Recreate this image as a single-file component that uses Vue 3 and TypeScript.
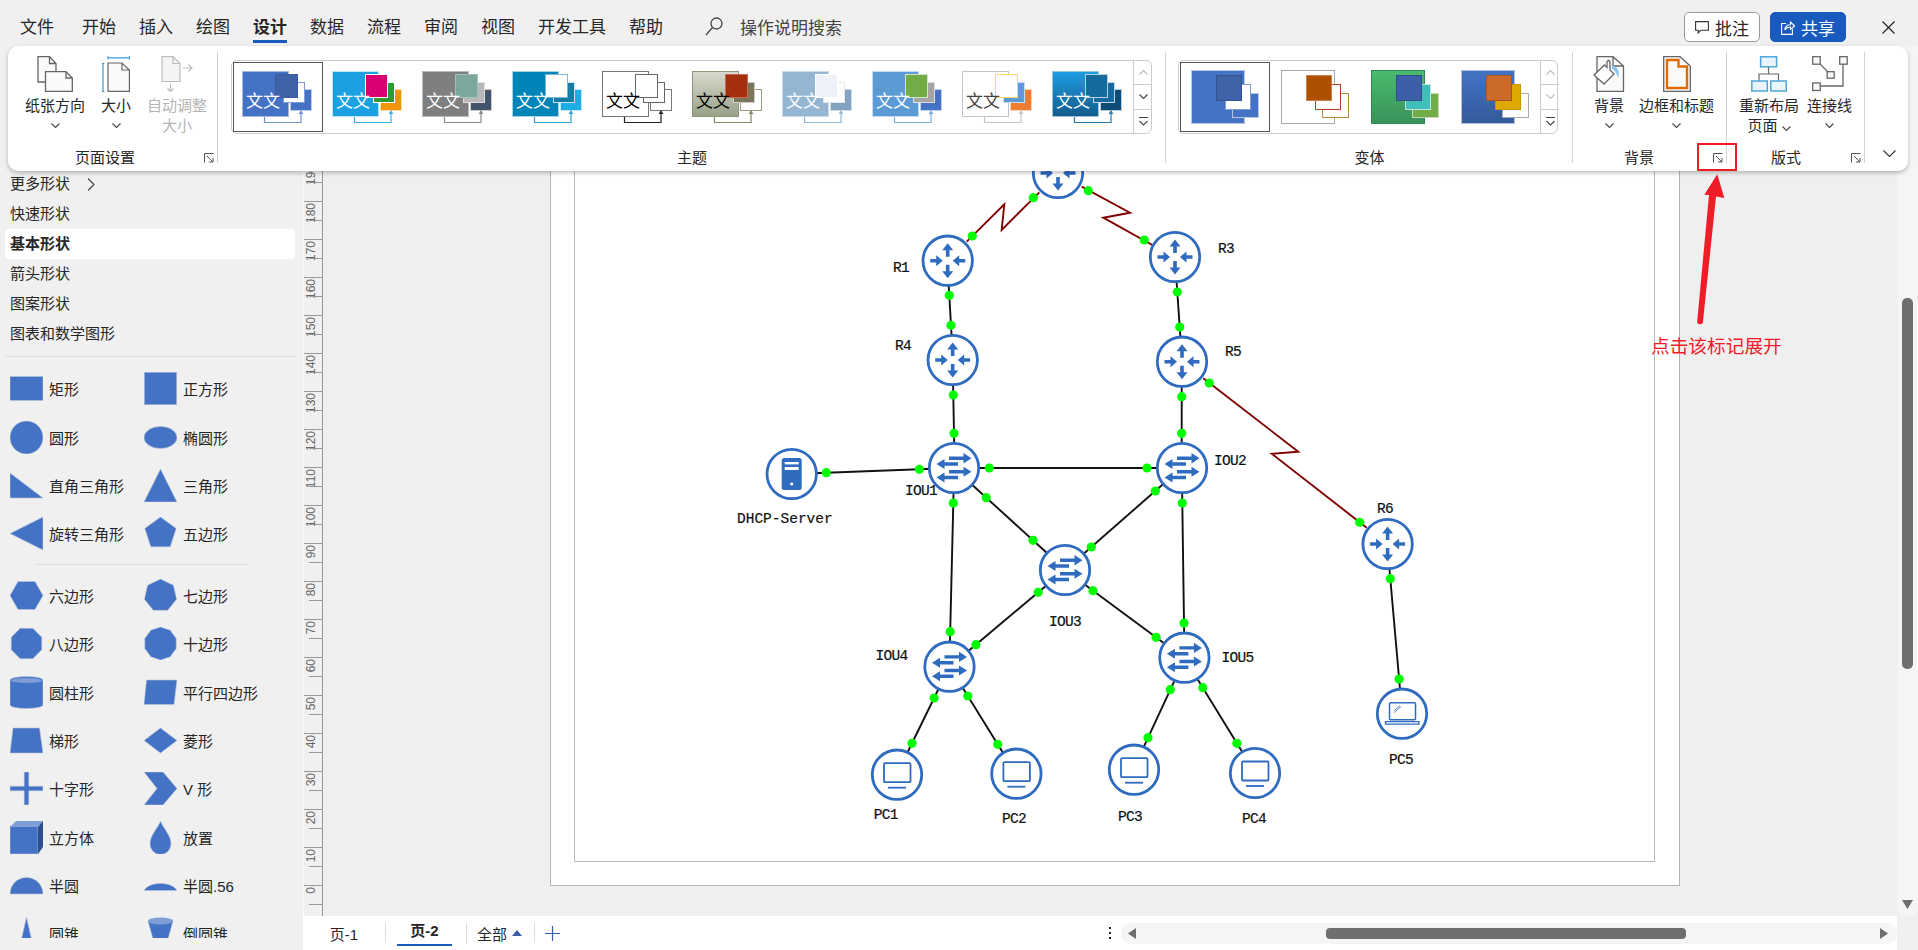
<template>
    <div class="app">
        <svg class="gradients" width="0" height="0" aria-hidden="true">
            <defs>
                <linearGradient id="g-stone" x1="0" y1="0" x2="0" y2="1">
                    <stop offset="0" stop-color="#d9dbce" />
                    <stop offset="1" stop-color="#98a188" />
                </linearGradient>
                <linearGradient id="g-ocean" x1="0" y1="0" x2="0" y2="1">
                    <stop offset="0" stop-color="#1f9de4" />
                    <stop offset="1" stop-color="#125c8a" />
                </linearGradient>
                <linearGradient id="g-leaf" x1="0" y1="0" x2="0" y2="1">
                    <stop offset="0" stop-color="#4abb6c" />
                    <stop offset="1" stop-color="#38925a" />
                </linearGradient>
                <linearGradient id="g-royal" x1="0" y1="0" x2="0" y2="1">
                    <stop offset="0" stop-color="#4472c4" />
                    <stop offset="1" stop-color="#335a9a" />
                </linearGradient>
            </defs>
        </svg>

        <header class="tabbar">
            <span v-for="tab in tabs" :key="tab" class="tab" :class="{ active: tab === '设计' }">{{ tab }}</span>
            <div class="search">
                <svg width="18" height="19" viewBox="0 0 18 19" fill="none" stroke="#444" stroke-width="1.3">
                    <circle cx="11.5" cy="6.5" r="5.5" />
                    <path d="M7.5 10.5L1 18" />
                </svg>
                <span>操作说明搜索</span>
            </div>
            <div class="top-actions">
                <button type="button" class="top-btn comment">
                    <svg width="14" height="13" viewBox="0 0 14 13" fill="none" stroke="#333" stroke-width="1.1">
                        <path d="M.6.6H13.4V9.2H6L3.2 12V9.2H.6Z" />
                    </svg>
                    批注
                </button>
                <button type="button" class="top-btn share">
                    <svg width="14" height="15" viewBox="0 0 14 15" fill="none" stroke="#fff" stroke-width="1.1">
                        <path d="M5 3.5H.6V14.4H11.4V9" />
                        <path d="M3.8 10C4 6.5 6.5 4.8 9.5 4.8V2L13.6 6L9.5 9.4V7C7 7 5 8 3.8 10Z" />
                    </svg>
                    共享
                </button>
                <svg class="close" width="13" height="13" viewBox="0 0 13 13" stroke="#222" stroke-width="1.2">
                    <path d="M.5.5L12.5 12.5M12.5.5L.5 12.5" />
                </svg>
            </div>
        </header>

        <div class="workspace">
            <aside class="panel">
                <div
                    v-for="item in stencils"
                    :key="item"
                    class="stencil"
                    :class="{ current: item === '基本形状' }"
                >
                    {{ item }}
                    <svg v-if="item === '更多形状'" class="more" width="8" height="13" viewBox="0 0 8 13" fill="none" stroke="#444" stroke-width="1.1">
                        <path d="M1 .5L7 6.5L1 12.5" />
                    </svg>
                </div>
                <div class="rule"></div>
                <div class="shape-grid first">
                    <div v-for="s in shapesA" :key="s.label" class="shape">
                        <svg width="33" height="33" viewBox="0 0 33 33">
                            <path :d="s.d" class="shape-fill" />
                            <path v-if="s.light" :d="s.light" fill="#7f9dd6" />
                            <path v-if="s.dark" :d="s.dark" fill="#2f4f8c" />
                        </svg>
                        <span>{{ s.label }}</span>
                    </div>
                </div>
                <div class="rule short"></div>
                <div class="shape-grid">
                    <div v-for="s in shapesB" :key="s.label" class="shape">
                        <svg width="33" height="33" viewBox="0 0 33 33">
                            <path :d="s.d" class="shape-fill" />
                            <path v-if="s.light" :d="s.light" fill="#7f9dd6" />
                            <path v-if="s.dark" :d="s.dark" fill="#2f4f8c" />
                        </svg>
                        <span>{{ s.label }}</span>
                    </div>
                </div>
            </aside>

            <div class="center">
                <div class="stage">
                    <div class="ruler">
                        <div v-for="n in rulerMarks" :key="n" class="mark">
                            <span>{{ n }}</span>
                        </div>
                    </div>
                    <div class="canvas">
                        <div class="page">
                            <div class="page-inner"></div>
                            <svg class="diagram" width="1130" height="840" viewBox="550 46 1130 840">
                                <defs>
                                    <g id="ico-router" fill="#2f6bbf" stroke="none">
                                        <path d="M-1.8-4V-10.5H-5.5L0-17.5L5.5-10.5H1.8V-4Z" />
                                        <path d="M-1.8 4V10.5H-5.5L0 17.5L5.5 10.5H1.8V4Z" />
                                        <path d="M-17.5-1.8H-11.5V-5.5L-5 0L-11.5 5.5V1.8H-17.5Z" />
                                        <path d="M17.5-1.8H11.5V-5.5L5 0L11.5 5.5V1.8H17.5Z" />
                                    </g>
                                    <g id="ico-switch" fill="#2f6bbf" stroke="none">
                                        <path d="M-5-11.5H9.5V-15L17.5-9.8L9.5-4.6V-8.1H-5Z" />
                                        <path d="M4-5.7H-9.5V-9L-17.5-4L-9.5 1V-2.3H4Z" />
                                        <path d="M-5 2.1H9.5V-1.2L17.5 3.8L9.5 8.8V5.5H-5Z" />
                                        <path d="M4 7.8H-9.5V4.5L-17.5 9.5L-9.5 14.5V11.2H4Z" />
                                    </g>
                                    <g id="ico-server">
                                        <rect x="-10" y="-16" width="20" height="32" rx="2.5" fill="#2f6bbf" />
                                        <rect x="-7" y="-12" width="14" height="2.4" fill="#fff" />
                                        <rect x="-7" y="-7" width="14" height="3" fill="#fff" />
                                        <circle cx="0" cy="10" r="1.6" fill="#fff" />
                                    </g>
                                    <g id="ico-pc" fill="none" stroke="#2f6bbf">
                                        <rect x="-13" y="-11.5" width="26.5" height="19" rx="1" stroke-width="1.8" />
                                        <path d="M-9 13H9" stroke-width="1.8" />
                                    </g>
                                    <g id="ico-laptop" fill="none" stroke="#2f6bbf">
                                        <rect x="-12.5" y="-11" width="26" height="17" rx="1" stroke-width="1.5" />
                                        <path d="M-8-3L-2-8M-8-1L-1-7" stroke-width=".8" />
                                        <path d="M-16.5 8H17V10.5H-16.5Z" stroke-width="1.3" />
                                    </g>
                                </defs>
                                <polyline
                                    v-for="(w, i) in wires"
                                    :key="i"
                                    :points="w.points"
                                    :stroke="w.color"
                                    stroke-width="1.9"
                                    fill="none"
                                />
                                <g v-for="n in nodes" :key="n.x + '-' + n.y" :transform="`translate(${n.x} ${n.y})`">
                                    <circle r="24.7" fill="#fff" stroke="#2f6bbf" stroke-width="2.8" />
                                    <use :href="'#ico-' + n.kind" />
                                </g>
                                <circle v-for="(d, i) in dots" :key="i" :cx="d[0]" :cy="d[1]" r="4.6" fill="#00ff00" />
                                <text
                                    v-for="t in labels"
                                    :key="t.text"
                                    class="node-label"
                                    :class="{ wide: t.text.length > 4 }"
                                    :x="t.x"
                                    :y="t.y + 5"
                                >{{ t.text }}</text>
                            </svg>
                        </div>
                    </div>
                    <div class="vscroll">
                        <div class="vthumb"></div>
                        <svg class="vdown" width="11" height="9" viewBox="0 0 11 9"><path d="M0 0H11L5.5 9Z" fill="#6f6f6f" /></svg>
                    </div>
                </div>

                <footer class="pagebar">
                    <span class="page-tab">页-1</span>
                    <i class="sep"></i>
                    <span class="page-tab active">页-2</span>
                    <i class="sep"></i>
                    <span class="all">全部</span>
                    <svg class="all-tri" width="10" height="6" viewBox="0 0 10 6"><path d="M5 0L10 6H0Z" fill="#3a5ca8" /></svg>
                    <i class="sep plus-sep"></i>
                    <svg class="plus" width="15" height="15" viewBox="0 0 15 15" stroke="#3a5ca8" stroke-width="1.2">
                        <path d="M0 7.5H15M7.5 0V15" />
                    </svg>
                    <div class="hscroll-wrap">
                        <svg width="2" height="12" viewBox="0 0 2 12" fill="#222">
                            <rect y="0" width="2" height="2" /><rect y="5" width="2" height="2" /><rect y="10" width="2" height="2" />
                        </svg>
                        <div class="hscroll">
                            <svg width="8" height="11" viewBox="0 0 8 11"><path d="M8 0V11L0 5.5Z" fill="#6f6f6f" /></svg>
                            <div class="hthumb"></div>
                            <svg width="8" height="11" viewBox="0 0 8 11"><path d="M0 0V11L8 5.5Z" fill="#6f6f6f" /></svg>
                        </div>
                    </div>
                </footer>
            </div>
        </div>

        <section class="ribbon">
            <div class="group page-group">
                <div class="tools">
                    <div class="tool w60">
                        <svg width="36" height="36" viewBox="0 0 36 36" fill="#fafafa" stroke="#666" stroke-width="1.3">
                            <path d="M1 .7H12.5L19 7.5V26H1Z" />
                            <path d="M12.5 .7V7.5H19" fill="none" />
                            <path d="M8.5 15.7H29L35.3 22V35.3H8.5Z" />
                            <path d="M29 15.7V22H35.3" fill="none" />
                        </svg>
                        <span>纸张方向</span>
                        <svg class="chev" width="9" height="5" viewBox="0 0 9 5"><path d="M.5 .5L4.5 4.5L8.5 .5" /></svg>
                    </div>
                    <div class="tool w32">
                        <svg width="28" height="36" viewBox="0 0 28 36" fill="none" stroke-width="1.2">
                            <path d="M6 1.8H27.5M6 .2V3.4M27.5 .2V3.4" stroke="#3a9ad9" />
                            <path d="M1 7.5V35.5M0 7.5H2.4M0 35.5H2.4" stroke="#3a9ad9" />
                            <path d="M6 7H20L27.4 14V35.3H6Z" stroke="#666" fill="#fafafa" />
                            <path d="M20 7V14H27.4" stroke="#666" />
                        </svg>
                        <span>大小</span>
                        <svg class="chev" width="9" height="5" viewBox="0 0 9 5"><path d="M.5 .5L4.5 4.5L8.5 .5" /></svg>
                    </div>
                    <div class="tool w60 disabled">
                        <svg width="32" height="36" viewBox="0 0 32 36" fill="none" stroke="#bdbdbd" stroke-width="1.2">
                            <path d="M1 .7H12L19 7.5V25.5H1Z" fill="#f4f4f4" />
                            <path d="M12 .7V7.5H19" />
                            <path d="M22 12H31M27.5 8.5L31 12L27.5 15.5" />
                            <path d="M9.5 27.5V35.5M6.5 32.5L9.5 35.5L12.5 32.5" />
                        </svg>
                        <span>自动调整</span>
                        <span>大小</span>
                    </div>
                </div>
                <div class="group-label" style="padding-right: 16px">页面设置</div>
                <svg class="launcher" width="10" height="10" viewBox="0 0 10 10" fill="none" stroke="#555" stroke-width="1"><path d="M.5 9.5V.5H9.5M3 3L9 9M9 5V9H5" /></svg>
            </div>

            <div class="group theme-group">
                <div class="gallery">
                    <div class="gallery-items">
                        <div v-for="(t, i) in themes" :key="i" class="gallery-item" :class="{ selected: i === 0 }">
                            <svg width="88" height="68" viewBox="1 1 88 68">
                                <rect x="9.5" y="9.5" width="46" height="45" :fill="t.main" :stroke="t.mainStroke" />
                                <rect x="57.5" y="27.5" width="21" height="21" :fill="t.r4" :stroke="t.r4Stroke" />
                                <rect x="50.5" y="20.5" width="21" height="20" :fill="t.r3" :stroke="t.r3Stroke" />
                                <rect x="42.5" y="12.5" width="22" height="23" :fill="t.r2" :stroke="t.r2Stroke" />
                                <path d="M31.5 55V60.5H68V51" fill="none" :stroke="t.link" stroke-width="1.2" />
                                <path d="M68 48L70.4 52H65.6Z" :fill="t.link" />
                                <text x="13" y="45" class="theme-text" :fill="t.text">文文</text>
                            </svg>
                        </div>
                    </div>
                    <div class="gallery-scroll">
                        <div><svg width="9" height="5" viewBox="0 0 9 5" class="chev off"><path d="M.5 4.5L4.5 .5L8.5 4.5" /></svg></div>
                        <div><svg width="9" height="5" viewBox="0 0 9 5" class="chev"><path d="M.5 .5L4.5 4.5L8.5 .5" /></svg></div>
                        <div><svg width="9" height="9" viewBox="0 0 9 9" class="chev"><path d="M0 .5H9M.5 4L4.5 8L8.5 4" /></svg></div>
                    </div>
                </div>
                <div class="group-label">主题</div>
            </div>

            <div class="group variant-group">
                <div class="gallery">
                    <div class="gallery-items">
                        <div v-for="(v, i) in variants" :key="i" class="gallery-item" :class="{ selected: i === 0 }">
                            <svg width="88" height="68" viewBox="1 1 88 68">
                                <rect x="11.5" y="8.5" width="53" height="53" :fill="v.main" :stroke="v.mainStroke" />
                                <rect x="52.5" y="31.5" width="26" height="24" :fill="v.r4" :stroke="v.r4Stroke" />
                                <rect x="45.5" y="22.5" width="25" height="25" :fill="v.r3" :stroke="v.r3Stroke" />
                                <rect x="36.5" y="13.5" width="25" height="25" :fill="v.r2" :stroke="v.r2Stroke" />
                            </svg>
                        </div>
                    </div>
                    <div class="gallery-scroll">
                        <div><svg width="9" height="5" viewBox="0 0 9 5" class="chev off"><path d="M.5 4.5L4.5 .5L8.5 4.5" /></svg></div>
                        <div><svg width="9" height="5" viewBox="0 0 9 5" class="chev off"><path d="M.5 .5L4.5 4.5L8.5 .5" /></svg></div>
                        <div><svg width="9" height="9" viewBox="0 0 9 9" class="chev"><path d="M0 .5H9M.5 4L4.5 8L8.5 4" /></svg></div>
                    </div>
                </div>
                <div class="group-label">变体</div>
            </div>

            <div class="group bg-group">
                <div class="tools">
                    <div class="tool w30">
                        <svg width="32" height="36" viewBox="0 0 32 36" fill="none" stroke="#666" stroke-width="1.3">
                            <path d="M4 .7H20L30.5 10V35.3H4Z" fill="#fafafa" />
                            <path d="M20 .7V10H30.5" />
                            <path d="M19 9C25 11 27 16 25 22C24 18 22 14 19 13Z" fill="#8cc3ea" stroke="none" />
                            <path d="M1 19L11.5 9L14 11.5V6C14 4 17 4 17 6V14L21 18L11 28Z" fill="#fff" />
                        </svg>
                        <span>背景</span>
                        <svg class="chev" width="9" height="5" viewBox="0 0 9 5"><path d="M.5 .5L4.5 4.5L8.5 .5" /></svg>
                    </div>
                    <div class="tool w75">
                        <svg width="28" height="36" viewBox="0 0 28 36" fill="none">
                            <path d="M.7 .7H17L27.3 10V35.3H.7Z" fill="#fafafa" stroke="#666" stroke-width="1.3" />
                            <path d="M4 4H15.5V10.5H24V32H4Z" stroke="#e06c00" stroke-width="2.4" />
                        </svg>
                        <span>边框和标题</span>
                        <svg class="chev" width="9" height="5" viewBox="0 0 9 5"><path d="M.5 .5L4.5 4.5L8.5 .5" /></svg>
                    </div>
                </div>
                <div class="group-label" style="padding-right: 22px">背景</div>
                <svg class="launcher" width="10" height="10" viewBox="0 0 10 10" fill="none" stroke="#555" stroke-width="1"><path d="M.5 9.5V.5H9.5M3 3L9 9M9 5V9H5" /></svg>
            </div>

            <div class="group layout-group">
                <div class="tools">
                    <div class="tool w60">
                        <svg width="36" height="36" viewBox="0 0 36 36" fill="none">
                            <path d="M17.5 11V18M8 25V18H27.5V25" stroke="#666" stroke-width="1.2" />
                            <rect x="9.6" y=".8" width="16" height="10" fill="#eaf4fb" stroke="#4ea6dc" stroke-width="1.5" />
                            <rect x=".8" y="25" width="15.5" height="10" fill="#eaf4fb" stroke="#4ea6dc" stroke-width="1.5" />
                            <rect x="19.8" y="25" width="15.5" height="10" fill="#eaf4fb" stroke="#4ea6dc" stroke-width="1.5" />
                        </svg>
                        <span>重新布局</span>
                        <span>页面 <svg class="chev" width="9" height="5" viewBox="0 0 9 5"><path d="M.5 .5L4.5 4.5L8.5 .5" /></svg></span>
                    </div>
                    <div class="tool w45">
                        <svg width="36" height="36" viewBox="0 0 36 36" fill="none" stroke="#666" stroke-width="1.3">
                            <path d="M8 8L15.5 15.5M31 8V30H8" />
                            <rect x=".7" y=".7" width="7.5" height="7.5" fill="#fafafa" />
                            <rect x="27.7" y=".7" width="7.5" height="7.5" fill="#fafafa" />
                            <rect x="15.2" y="15.7" width="7" height="6.5" fill="#fafafa" />
                            <rect x=".7" y="27" width="7.5" height="7.5" fill="#fafafa" />
                        </svg>
                        <span>连接线</span>
                        <svg class="chev" width="9" height="5" viewBox="0 0 9 5"><path d="M.5 .5L4.5 4.5L8.5 .5" /></svg>
                    </div>
                </div>
                <div class="group-label" style="padding-right: 20px">版式</div>
                <svg class="launcher" width="10" height="10" viewBox="0 0 10 10" fill="none" stroke="#555" stroke-width="1"><path d="M.5 9.5V.5H9.5M3 3L9 9M9 5V9H5" /></svg>
            </div>

            <svg class="collapse" width="13" height="7" viewBox="0 0 13 7" fill="none" stroke="#333" stroke-width="1.1"><path d="M.5 .5L6.5 6.5L12.5 .5" /></svg>
        </section>

        <div class="mark-box"></div>
        <svg class="mark-arrow" width="30" height="152" viewBox="0 0 30 152">
            <path d="M22.3 .3L29.3 24L21 22.4L8 147.6A2.9 2.9 0 0 1 2.2 147.2L14 21L9.3 20.7Z" fill="#f01c28" />
        </svg>
        <div class="mark-text">点击该标记展开</div>
    </div>
</template>

<script setup lang="ts">
interface Swatch {
    main: string;
    mainStroke: string;
    r2: string;
    r2Stroke: string;
    r3: string;
    r3Stroke: string;
    r4: string;
    r4Stroke: string;
    link?: string;
    text?: string;
}

interface ShapeItem {
    label: string;
    d: string;
    light?: string;
    dark?: string;
}

const tabs = ['文件', '开始', '插入', '绘图', '设计', '数据', '流程', '审阅', '视图', '开发工具', '帮助'];
const stencils = ['更多形状', '快速形状', '基本形状', '箭头形状', '图案形状', '图表和数学图形'];

const swatch = (
    main: string, mainStroke: string,
    r2: string, r2Stroke: string,
    r3: string, r3Stroke: string,
    r4: string, r4Stroke: string,
    link?: string, text?: string,
): Swatch => ({ main, mainStroke, r2, r2Stroke, r3, r3Stroke, r4, r4Stroke, link, text });

const themes: Swatch[] = [
    swatch('#4472c4', '#a9bbdc', '#3f62a9', '#3b5a98', '#fff', '#7f9bd3', '#4472c4', '#c0cee6', '#7392d2', '#fff'),
    swatch('#1ba1e2', '#bfe3f6', '#d80073', '#fff', '#339933', '#fff', '#f09609', '#fbe0b0', '#3fb0e6', '#fff'),
    swatch('#7f7f7f', '#bbb', '#7ba79d', '#a3c2ba', '#b8b8b8', '#ddd', '#44546a', '#ccc', '#8a8a8a', '#fff'),
    swatch('#0085b8', '#a8d4e6', '#fff', '#7fb8d0', '#147ca5', '#cde4ee', '#1cade4', '#c3e8f7', '#2aa5d8', '#fff'),
    swatch('#fff', '#777', '#fff', '#666', '#fff', '#666', '#fff', '#777', '#222', '#000'),
    swatch('url(#g-stone)', '#8b9578', '#a5300f', '#c76b50', '#7a7458', '#ccc', '#fff', '#9e9a80', '#7d8b5f', '#000'),
    swatch('#94b6d2', '#ccdbe8', '#eef2f8', '#fff', '#fff', '#e0e8f0', '#84a3bf', '#ccdbe8', '#94b6d2', '#fff'),
    swatch('#5b9bd5', '#c3daf0', '#70ad47', '#d4e5c8', '#a5a5a5', '#ddd', '#4472c4', '#c4d2ea', '#79aee0', '#fff'),
    swatch('#fff', '#c4c4c4', '#fff', '#ffd966', '#5b9bd5', '#c9def2', '#ed7d31', '#f9d5bd', '#c4c4c4', '#444'),
    swatch('url(#g-ocean)', '#9cc3dc', '#156a9e', '#b5cfe0', '#156a9e', '#c3d8e6', '#0f4c75', '#b5cfe0', '#2c78ab', '#fff'),
];

const variants: Swatch[] = [
    swatch('#4472c4', '#b9c7e0', '#3f62a9', '#365491', '#fff', '#7f9bd3', '#4472c4', '#b9c7e0'),
    swatch('#fff', '#aaa', '#af5000', '#c9824a', '#fff', '#b5402a', '#fff', '#b58a3a'),
    swatch('url(#g-leaf)', '#2f8a50', '#3d5fa8', '#2f4c8c', '#40bfb8', '#bfe6e3', '#70ad47', '#c4d9b4'),
    swatch('url(#g-royal)', '#b5c1d8', '#cc6a2a', '#a85520', '#dfa800', '#c79500', '#fff', '#aaa'),
];

const regular = (n: number, rotate: number): string => {
    const pts: string[] = [];
    for (let i = 0; i < n; i++) {
        const a = rotate + (i * 2 * Math.PI) / n - Math.PI / 2;
        pts.push(`${(16.5 + 16.5 * Math.cos(a)).toFixed(2)} ${(16.5 + 16.5 * Math.sin(a)).toFixed(2)}`);
    }
    return 'M' + pts.join('L') + 'Z';
};

const shapesA: ShapeItem[] = [
    { label: '矩形', d: 'M0 4.5H33V28.5H0Z' },
    { label: '正方形', d: 'M.3 .3H32.7V32.7H.3Z' },
    { label: '圆形', d: 'M0 16.5A16.5 16.5 0 1 0 33 16.5A16.5 16.5 0 1 0 0 16.5Z' },
    { label: '椭圆形', d: 'M0 16.5A16.5 11 0 1 0 33 16.5A16.5 11 0 1 0 0 16.5Z' },
    { label: '直角三角形', d: 'M0 4L33 29H0Z' },
    { label: '三角形', d: 'M16.5 0L33 33H0Z' },
    { label: '旋转三角形', d: 'M33 0V33L0 16.5Z' },
    { label: '五边形', d: regular(5, 0) },
];

const shapesB: ShapeItem[] = [
    { label: '六边形', d: 'M8 2.5H25L33 16.5L25 30.5H8L0 16.5Z' },
    { label: '七边形', d: regular(7, 0) },
    { label: '八边形', d: regular(8, Math.PI / 8) },
    { label: '十边形', d: regular(10, 0) },
    { label: '圆柱形', d: 'M0 4A16.5 3.5 0 0 1 33 4V29A16.5 3.5 0 0 1 0 29Z', light: 'M1 4.5A15.5 2.6 0 0 1 32 4.5A15.5 2.6 0 0 1 1 4.5Z' },
    { label: '平行四边形', d: 'M2.5 4H33L30 28.5H0Z' },
    { label: '梯形', d: 'M3 4H29.5L33 29H0Z' },
    { label: '菱形', d: 'M16.5 4L33 16.5L16.5 29L0 16.5Z' },
    { label: '十字形', d: 'M14.2 0H18.8V14.2H33V18.8H18.8V33H14.2V18.8H0V14.2H14.2Z' },
    { label: 'V 形', d: 'M0 0H19L33 16.5L19 33H0L13 16.5Z' },
    { label: '立方体', d: 'M0 5H28V33H0Z', light: 'M0 6L6 0H33L28 6Z', dark: 'M28 6L33 0V26L28 33Z' },
    { label: '放置', d: 'M16.5 0C19 7 27 14 27 23A10.5 10.5 0 0 1 6 23C6 14 14 7 16.5 0Z' },
    { label: '半圆', d: 'M0 25A16.5 16.5 0 0 1 33 25Z' },
    { label: '半圆.56', d: 'M0 21.5C5 12 28 12 33 21.5Z' },
    { label: '圆锥', d: 'M16.5 0L24 33H9Z' },
    { label: '倒圆锥', d: 'M4 4H29L21 33H12Z', light: 'M4 4A12.5 3.4 0 0 1 29 4A12.5 3.4 0 0 1 4 4Z' },
];

const rulerMarks: number[] = [];
for (let n = 190; n >= 0; n -= 10) rulerMarks.push(n);

const nodes = [
    { kind: 'router', x: 1058, y: 173 },
    { kind: 'router', x: 947.7, y: 260.7 },
    { kind: 'router', x: 1175, y: 257 },
    { kind: 'router', x: 952.7, y: 360 },
    { kind: 'router', x: 1182, y: 361.7 },
    { kind: 'router', x: 1387.6, y: 544 },
    { kind: 'switch', x: 954, y: 468 },
    { kind: 'switch', x: 1182, y: 468 },
    { kind: 'switch', x: 1065, y: 570 },
    { kind: 'switch', x: 949.5, y: 666.7 },
    { kind: 'switch', x: 1184.4, y: 657.7 },
    { kind: 'server', x: 791.7, y: 474 },
    { kind: 'pc', x: 897, y: 774.7 },
    { kind: 'pc', x: 1016.4, y: 773.7 },
    { kind: 'pc', x: 1134, y: 769.7 },
    { kind: 'pc', x: 1255, y: 773 },
    { kind: 'laptop', x: 1402, y: 713.7 },
];

// each pair of dots sits on a black link, the line runs on under the node
const linkDots: number[][] = [
    [949.3, 295.3, 951, 325.3],
    [1177.3, 292, 1179.7, 327],
    [953.3, 395, 954, 433.3],
    [1181.7, 396.7, 1181.7, 433.3],
    [826.3, 472.7, 919.3, 469.3],
    [989.3, 468, 1147, 468],
    [953.3, 503, 950.2, 631.7],
    [986.3, 497.7, 1033, 540.3],
    [1155.3, 491, 1091.3, 547],
    [1182.3, 503, 1184, 623],
    [1038.2, 592.3, 975.9, 644.7],
    [1093, 590.7, 1156.1, 637.3],
    [934.1, 698, 912, 743.3],
    [967.8, 696, 997.7, 744.3],
    [1170.3, 689.7, 1148, 737.7],
    [1202.8, 687.7, 1236.9, 743.3],
    [1390.3, 578.7, 1399.1, 679],
];

const extend = ([ax, ay, bx, by]: number[]): string => {
    const len = Math.hypot(bx - ax, by - ay);
    const ux = ((bx - ax) / len) * 20;
    const uy = ((by - ay) / len) * 20;
    return `${ax - ux},${ay - uy} ${bx + ux},${by + uy}`;
};

const wires = [
    ...linkDots.map((l) => ({ points: extend(l), color: '#111' })),
    { points: '1039.3,192.3 1001.7,230 1004.3,204.3 966.7,241.7', color: '#800000' },
    { points: '1081.7,186.7 1130,212.7 1103.3,217.7 1152.3,245', color: '#800000' },
    { points: '1203.3,378.3 1298.3,451.7 1271.7,453.7 1366.7,527.7', color: '#800000' },
];

const dots: number[][] = [
    ...linkDots.flatMap((l) => [[l[0], l[1]], [l[2], l[3]]]),
    [1033.3, 197.7],
    [972.3, 236],
    [1088.3, 190.7],
    [1144.3, 240],
    [1209.3, 383],
    [1359.7, 522.3],
];

const labels = [
    { text: 'R1', x: 893, y: 267 },
    { text: 'R3', x: 1218, y: 248 },
    { text: 'R4', x: 895, y: 345 },
    { text: 'R5', x: 1225, y: 351 },
    { text: 'R6', x: 1377, y: 508 },
    { text: 'IOU1', x: 905, y: 489.7 },
    { text: 'IOU2', x: 1214, y: 460 },
    { text: 'IOU3', x: 1049, y: 621 },
    { text: 'IOU4', x: 875.6, y: 655 },
    { text: 'IOU5', x: 1221.5, y: 657 },
    { text: 'DHCP-Server', x: 737, y: 518 },
    { text: 'PC1', x: 873.7, y: 814 },
    { text: 'PC2', x: 1002, y: 818 },
    { text: 'PC3', x: 1118, y: 816 },
    { text: 'PC4', x: 1242, y: 818 },
    { text: 'PC5', x: 1389, y: 759 },
];
</script>

<style>
html,
body {
    margin: 0;
    background: #f0f0f0;
}
</style>

<style scoped>
.app {
    position: relative;
    width: 1918px;
    height: 950px;
    overflow: hidden;
    background: #f0f0f0;
    color: #262626;
    font-family: "Liberation Sans", "Noto Sans CJK SC", sans-serif;
    font-size: 15px;
}

.gradients {
    position: absolute;
}

.tabbar {
    display: flex;
    height: 46px;
    padding-left: 20px;
    gap: 23px;
    font-size: 17px;
}

.tab {
    position: relative;
    padding-top: 18px;
    line-height: 20px;
}

.tab:first-child {
    margin-right: 5px;
}

.tab.active {
    font-weight: 700;
}

.tab.active::after {
    content: "";
    position: absolute;
    left: 0;
    right: 0;
    top: 40px;
    height: 3px;
    background: #185abd;
}

.search {
    display: flex;
    align-items: center;
    gap: 17px;
    margin-left: 19px;
    padding-top: 7px;
    height: 38px;
    color: #444;
}

.top-actions {
    display: flex;
    align-items: flex-start;
    gap: 10px;
    margin-left: auto;
    padding: 12px 23px 0 0;
}

.top-btn {
    display: flex;
    align-items: center;
    justify-content: center;
    gap: 6px;
    width: 76px;
    height: 30px;
    padding: 0;
    border: 1px solid #999;
    border-radius: 5px;
    background: #fff;
    color: #262626;
    font: inherit;
}

.top-btn.share {
    border-color: #185abd;
    background: #185abd;
    color: #fff;
}

.close {
    margin: 9px 0 0 26px;
}

.workspace {
    display: flex;
    height: 904px;
}

.panel {
    flex: none;
    width: 303px;
    height: 892px;
    padding-top: 123px;
    box-sizing: border-box;
    overflow: hidden;
}

.stencil {
    display: flex;
    align-items: center;
    height: 30px;
    width: 290px;
    margin-left: 5px;
    padding-left: 5px;
    box-sizing: border-box;
    line-height: 30px;
    border-radius: 4px;
}

.stencil.current {
    background: #fff;
    font-weight: 700;
}

.more {
    margin-left: 17px;
}

.rule {
    height: 1px;
    width: 291px;
    margin: 7px 0 0 5px;
    background: #dcdcdc;
}

.rule.short {
    width: 211px;
    margin: 5.5px 0 0 36px;
}

.shape-grid {
    display: grid;
    grid-template-columns: 134px 134px;
    grid-auto-rows: 48.4px;
    padding: 6.5px 0 0 10px;
}

.shape-grid.first {
    padding-top: 7.5px;
}

.shape {
    display: flex;
    align-items: center;
    gap: 6px;
}

.shape-fill {
    fill: #4472c4;
    stroke: #b8c4dc;
    stroke-width: 0.6;
}

.center {
    flex: 1;
    display: flex;
    flex-direction: column;
    min-width: 0;
}

.stage {
    flex: none;
    display: flex;
    height: 870px;
}

.ruler {
    flex: none;
    width: 20px;
    box-sizing: border-box;
    padding-top: 117px;
    border-left: 1px solid #fafafa;
    border-right: 1px solid #999;
    overflow: hidden;
}

.mark {
    position: relative;
    height: 38px;
    box-sizing: border-box;
    border-top: 1px solid #999;
}

.mark::after {
    content: "";
    position: absolute;
    top: 18px;
    right: 0;
    width: 13px;
    height: 1px;
    background: #999;
}

.mark span {
    position: absolute;
    top: 1px;
    left: 1px;
    writing-mode: vertical-rl;
    transform: rotate(180deg);
    font-size: 12px;
    line-height: 13px;
    color: #666;
}

.canvas {
    flex: 1;
    background: #efefef;
    padding-left: 227px;
}

.page {
    position: relative;
    width: 1130px;
    height: 840px;
    box-sizing: border-box;
    padding: 0 24px 23px 23px;
    border: 1px solid #b4b4b8;
    border-top: 0;
    background: #fff;
}

.page-inner {
    height: 100%;
    box-sizing: border-box;
    border: 1px solid #bbb;
    border-top: 0;
}

.diagram {
    position: absolute;
    left: -1px;
    top: 0;
}

.node-label {
    font-family: "Liberation Mono", monospace;
    font-size: 14.5px;
    letter-spacing: -0.7px;
    fill: #111;
    stroke: #111;
    stroke-width: 0.2;
}

.node-label.wide {
    letter-spacing: 0;
}

.vscroll {
    position: relative;
    flex: none;
    width: 21px;
    background: #f5f5f5;
    border-radius: 0 0 8px 8px;
}

.vthumb {
    width: 11px;
    height: 371px;
    margin: 252px 0 0 5px;
    border-radius: 5px;
    background: #6f6f6f;
}

.vdown {
    position: absolute;
    left: 5px;
    bottom: 7px;
}

.pagebar {
    flex: none;
    display: flex;
    align-items: center;
    height: 34px;
    margin-right: 21px;
    background: #fff;
}

.page-tab {
    width: 82px;
    text-align: center;
}

.page-tab.active {
    position: relative;
    width: 67px;
    height: 32px;
    margin: -2px 8px 0 5px;
    line-height: 30px;
    font-weight: 700;
    box-sizing: border-box;
}

.page-tab.active::after {
    content: "";
    position: absolute;
    left: 6px;
    right: 6px;
    top: 28px;
    height: 1.5px;
    background: #185abd;
}

.sep {
    width: 1px;
    height: 20px;
    background: #ddd;
}

.all {
    margin-left: 10px;
}

.all-tri {
    margin-left: 5px;
}

.plus-sep {
    margin-left: 12px;
}

.plus {
    margin-left: 10px;
}

.hscroll-wrap {
    display: flex;
    align-items: center;
    gap: 10px;
    margin-left: auto;
}

.hscroll {
    position: relative;
    display: flex;
    align-items: center;
    justify-content: space-between;
    width: 776px;
    height: 21px;
    padding: 0 9px 0 7px;
    box-sizing: border-box;
    border-radius: 10px;
    background: #f5f5f5;
}

.hthumb {
    position: absolute;
    left: 205px;
    top: 5px;
    width: 360px;
    height: 11px;
    border-radius: 4px;
    background: #6f6f6f;
}

.ribbon {
    position: absolute;
    left: 8px;
    top: 46px;
    display: flex;
    width: 1900px;
    height: 125px;
    border-radius: 10px;
    background: #fff;
    box-shadow: 0 2px 4px rgba(0, 0, 0, 0.25);
}

.group {
    position: relative;
    display: flex;
    flex-direction: column;
    flex: none;
    box-sizing: border-box;
    height: 125px;
    padding-top: 10px;
}

.group::after {
    content: "";
    position: absolute;
    right: 0;
    top: 6px;
    bottom: 8px;
    width: 1px;
    background: #d4d4d4;
}

.page-group {
    width: 210px;
}

.theme-group {
    width: 948px;
}

.variant-group {
    width: 407px;
}

.bg-group {
    width: 154px;
}

.layout-group {
    width: 138px;
}

.tools {
    flex: 1;
    display: flex;
    gap: 15px;
    padding-left: 17px;
}

.bg-group .tools {
    padding-left: 21px;
}

.layout-group .tools {
    padding-left: 12px;
    gap: 8px;
}

.tool {
    display: flex;
    flex-direction: column;
    align-items: center;
    line-height: 19.5px;
    white-space: nowrap;
}

.tool > svg:first-child {
    flex: none;
    margin-bottom: 4px;
}

.tool.disabled {
    color: #b5b5b5;
}

.w30 {
    width: 30px;
}

.w32 {
    width: 32px;
}

.w45 {
    width: 45px;
}

.w60 {
    width: 60px;
}

.w75 {
    width: 75px;
}

.chev {
    fill: none;
    stroke: #444;
    stroke-width: 1.1;
}

.tool > .chev {
    margin-top: 7px;
}

.chev.off {
    stroke: #bdbdbd;
}

.group-label {
    height: 20px;
    margin-bottom: 3px;
    line-height: 20px;
    text-align: center;
}

.launcher {
    position: absolute;
    right: 4px;
    bottom: 8px;
}

.gallery {
    flex: 1;
    display: flex;
    margin-top: 4px;
    margin-bottom: 14px;
    box-sizing: border-box;
    border: 1px solid #ccc;
    border-radius: 6px;
}

.theme-group .gallery {
    margin-left: 13px;
    margin-right: 14px;
}

.variant-group .gallery {
    margin-left: 12px;
    margin-right: 15px;
}

.gallery-items {
    flex: 1;
    display: flex;
    padding: 1px 0 0 1px;
}

.gallery-item {
    flex: none;
    width: 90px;
    height: 70px;
    box-sizing: border-box;
}

.gallery-item svg {
    display: block;
    margin: 1px;
}

.gallery-item.selected {
    border: 1px solid #555;
    background: #f3f3f3;
}

.gallery-item.selected svg {
    margin: 0;
    background: #fff;
}

.theme-text {
    font-size: 17px;
}

.gallery-scroll {
    flex: none;
    display: flex;
    flex-direction: column;
    width: 18px;
    border-left: 1px solid #ccc;
}

.gallery-scroll > div {
    flex: 1;
    display: flex;
    align-items: center;
    justify-content: center;
    border-bottom: 1px solid #ccc;
}

.gallery-scroll > div:last-child {
    border-bottom: 0;
}

.collapse {
    position: absolute;
    left: 1875px;
    top: 104px;
}

.mark-box {
    position: absolute;
    left: 1697px;
    top: 143px;
    width: 40px;
    height: 28px;
    box-sizing: border-box;
    border: 2px solid #ee1c25;
}

.mark-arrow {
    position: absolute;
    left: 1695px;
    top: 174px;
}

.mark-text {
    position: absolute;
    left: 1651px;
    top: 334px;
    font-size: 18.7px;
    line-height: 26px;
    color: #f01c28;
}
</style>
